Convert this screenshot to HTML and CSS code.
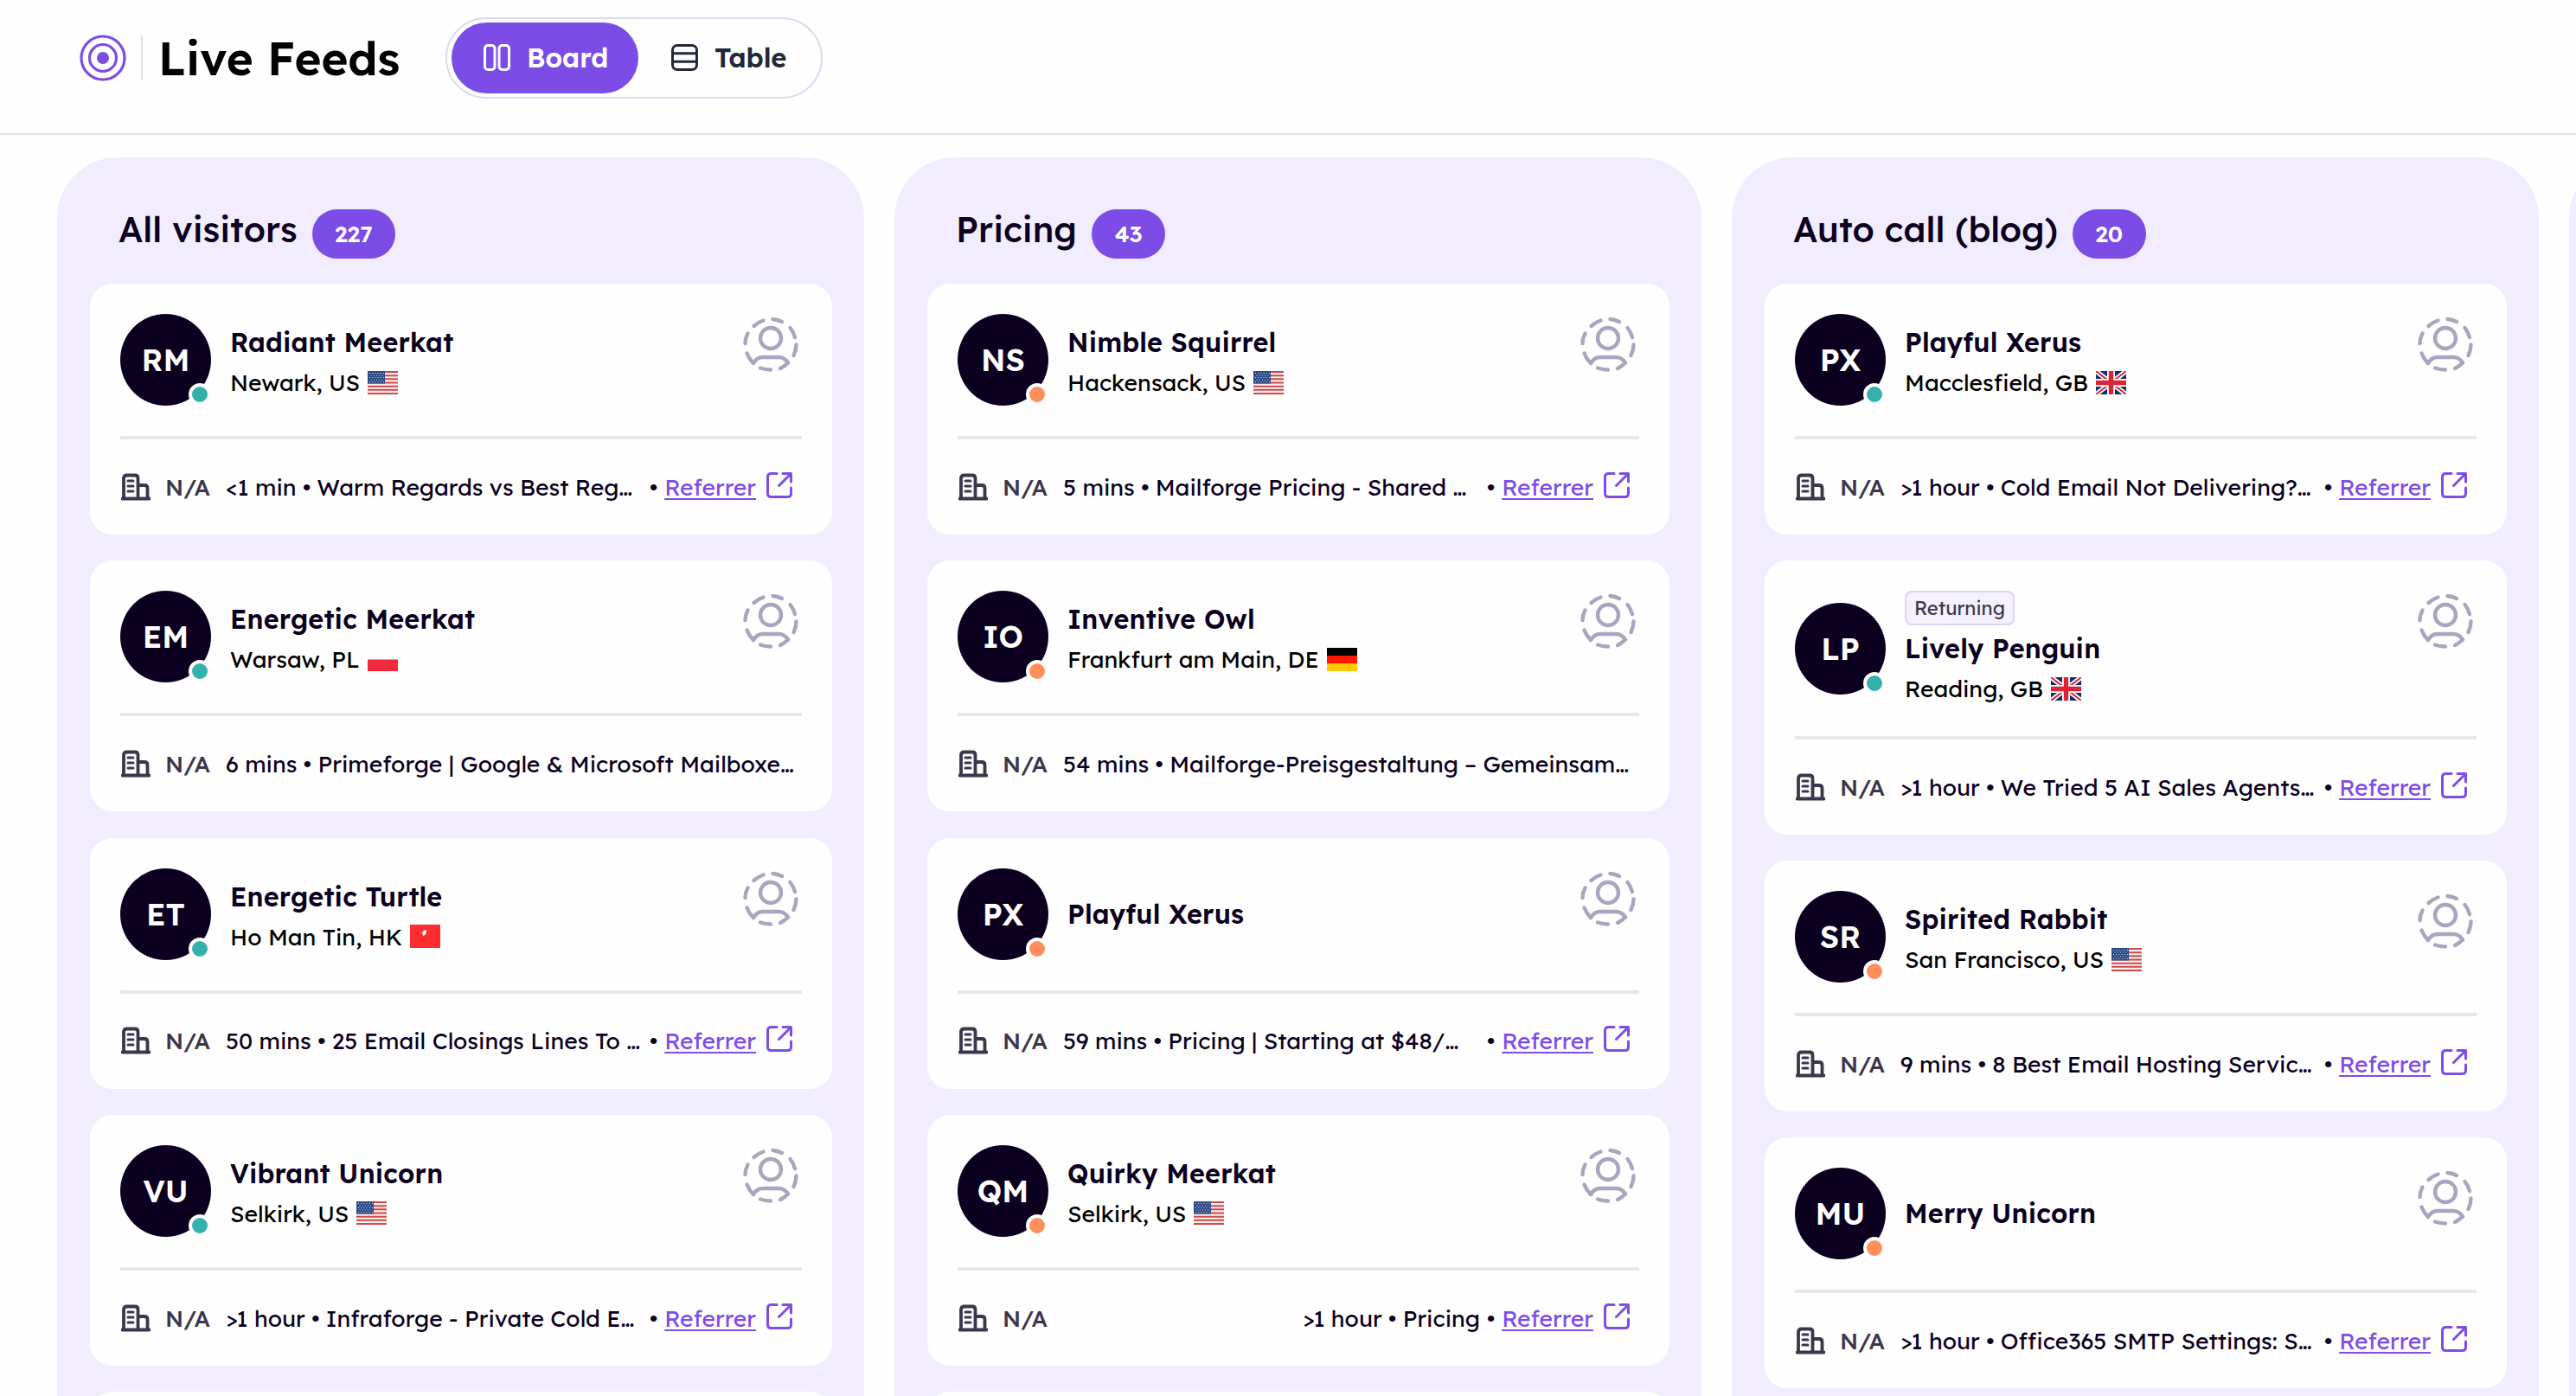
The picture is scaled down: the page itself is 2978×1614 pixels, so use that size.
FILE: index.html
```
<!DOCTYPE html>
<html lang="en">
<head>
    <meta charset="UTF-8">
    <meta name="viewport" content="width=device-width, initial-scale=1.0">
    <title>Live Feeds</title>
    <link rel="stylesheet" href="styles.css">
</head>
<body>
    <!-- Shared icons -->
    <svg class="sprite" aria-hidden="true">
        <symbol id="icon-building" viewBox="0 0 34 32">
            <path d="M3 29V6q0-3.500 3.500-3.500H16q3.500 0 3.500 3.500V29M19.500 14H27q3.500 0 3.500 3.500V29M1.500 29.500H32.500" fill="none" stroke="currentColor" stroke-width="3.800" stroke-linecap="round"/>
            <path d="M8 9h6M8 15h6M8 21h6" fill="none" stroke="currentColor" stroke-width="3" stroke-linecap="round"/>
        </symbol>
        <symbol id="icon-link" viewBox="0 0 30 30">
            <path d="M12 1.500H5.500Q1.500 1.500 1.500 5.500V24.500Q1.500 28.500 5.500 28.500H24.500Q28.500 28.500 28.500 24.500V18M19 1.500H28.500V11M28 2L14.500 15.500" fill="none" stroke="currentColor" stroke-width="3" stroke-linecap="round" stroke-linejoin="round"/>
        </symbol>
        <symbol id="icon-user" viewBox="0 0 64 64">
            <g fill="none" stroke="currentColor" stroke-width="4.400" stroke-linecap="round" stroke-linejoin="round">
                <circle cx="32" cy="25" r="12"/>
                <path d="M12 54Q16 47 23 47H41Q48 47 52 53.500"/>
                <path d="M34.500 3Q40 3.500 45 6M54.500 13Q58.500 18 60 24M61.500 32.500Q61.500 39 58.500 45M52 53.500Q48 57.500 43 60M32 61.500Q26 61.500 20 59.500M12 54Q7 49 4.500 42.500M2.500 31Q2.500 25 5.500 19.500M12.500 11Q17.500 6.500 23.500 4.500"/>
            </g>
        </symbol>
        <symbol id="flag-US" viewBox="0 0 35 27">
            <path fill="#f4f0f0" d="M0 0h35v27H0z"/>
            <path d="M0 1h35M0 5.200h35M0 9.300h35M0 13.500h35M0 17.700h35M0 21.800h35M0 26h35" stroke="#d0494a" stroke-width="2.100"/>
            <path fill="#2c4a85" d="M0 0h20v14.500H0z"/>
            <path d="M2 2.500h17M3.500 5h15M2 7.500h17M3.500 10h15M2 12.500h17" stroke="#dfe4ef" stroke-width="1" stroke-dasharray="1 2.200"/>
        </symbol>
        <symbol id="flag-GB" viewBox="0 0 35 27">
            <path fill="#0c2b70" d="M0 0h35v27H0z"/>
            <path d="M0 0l35 27M35 0L0 27" stroke="#fff" stroke-width="5.500"/>
            <path d="M0 0l35 27M35 0L0 27" stroke="#dc2436" stroke-width="2"/>
            <path d="M17.500 0v27M0 13.500h35" stroke="#fff" stroke-width="9"/>
            <path d="M17.500 0v27M0 13.500h35" stroke="#dc2436" stroke-width="5.400"/>
        </symbol>
        <symbol id="flag-DE" viewBox="0 0 35 27">
            <path d="M0 0h35v9H0z"/>
            <path fill="#ff1700" d="M0 9h35v9H0z"/>
            <path fill="#ffc800" d="M0 18h35v9H0z"/>
        </symbol>
        <symbol id="flag-PL" viewBox="0 0 35 27">
            <path fill="#fefefe" d="M0 0h35v13.500H0z"/>
            <path fill="#f02a3c" d="M0 13.500h35V27H0z"/>
        </symbol>
        <symbol id="flag-HK" viewBox="0 0 35 27">
            <path fill="#ff2d2f" d="M0 0h35v27H0z"/>
            <path fill="#fff" d="M15.500 13q-3-4 1-6.500q3-1 2.500 1.500q0 3-3.500 5z"/>
        </symbol>
    </svg>

    <header class="topbar">
        <svg class="logo" viewBox="0 0 54 54" fill="none" stroke="#7c4ce6" stroke-width="3.200">
            <circle cx="27" cy="27" r="25"/>
            <circle cx="27" cy="27" r="15.500"/>
            <circle cx="27" cy="27" r="7" fill="#7c4ce6" stroke="none"/>
        </svg>
        <span class="topbar-divider"></span>
        <h1 class="page-title">Live Feeds</h1>
        <div class="view-switch">
            <button class="view-button active">
                <svg class="view-icon" viewBox="0 0 31 31" fill="none" stroke="currentColor" stroke-width="3">
                    <rect x="1.500" y="1.500" width="11.500" height="28" rx="3.500"/>
                    <rect x="18" y="1.500" width="11.500" height="28" rx="3.500"/>
                </svg>
                <span>Board</span>
            </button>
            <button class="view-button">
                <svg class="view-icon" viewBox="0 0 31 31" fill="none" stroke="currentColor" stroke-width="3">
                    <rect x="1.500" y="1.500" width="28" height="28" rx="5.500"/>
                    <path d="M2 10.800h27M2 20.200h27"/>
                </svg>
                <span>Table</span>
            </button>
        </div>
    </header>

    <main class="board" id="board"></main>

    <script src="feeds.js"></script>
</body>
</html>
```
FILE: styles.css
```
body {
    margin: 0;
    height: 1614px;
    overflow: hidden;
    background-color: #fefefe;
    color: #0b0020;
    font-family: Lexend, Inter, "Open Sans", sans-serif;
}

.sprite {
    display: none;
}

/* Top bar */
.topbar {
    box-sizing: border-box;
    height: 156px;
    padding: 20px 0 0 92px;
    display: flex;
    align-items: flex-start;
    border-bottom: 2px solid #e9e2f2;
}

.logo {
    width: 54px;
    height: 54px;
    margin-top: 20px;
}

.topbar-divider {
    width: 2px;
    height: 52px;
    margin: 21px 18px 0 17px;
    background-color: #e0e3ee;
}

.page-title {
    width: 332px;
    margin: 16px 0 0;
    line-height: 62px;
    font-size: 52.800px;
    font-weight: 600;
    color: #000;
}

.view-switch {
    box-sizing: border-box;
    width: 436px;
    height: 94px;
    padding: 4px 5px;
    display: flex;
    border: 2px solid #dedaee;
    border-radius: 47px;
}

.view-button {
    box-sizing: border-box;
    flex: 0 0 216px;
    height: 82px;
    padding: 0 0 1px 37px;
    display: flex;
    align-items: center;
    gap: 19px;
    border: none;
    border-radius: 41px;
    background: none;
    color: #232838;
    font-family: inherit;
    font-size: 31px;
    font-weight: 600;
    cursor: pointer;
}

.view-button + .view-button {
    padding-left: 38px;
}

.view-button.active {
    background-color: #7c4ce6;
    color: #fff;
}

.view-icon {
    width: 31px;
    height: 31px;
}

/* Columns */
.board {
    display: flex;
    gap: 35px;
    padding: 26px 0 0 66px;
}

.column {
    box-sizing: border-box;
    flex: 0 0 933px;
    height: 1432px;
    overflow: hidden;
    padding: 0 37px 0 38px;
    border-radius: 70px 70px 0 0;
    background-color: #f1ecfe;
}

.column-header {
    height: 146px;
    padding-left: 33px;
    display: flex;
    align-items: flex-start;
}

.column-title {
    margin: 58px 17px 0 0;
    line-height: 50px;
    font-size: 40.500px;
    font-weight: 500;
}

.column-count {
    margin-top: 60px;
    padding: 0 26.500px;
    line-height: 57px;
    border-radius: 29px;
    background-color: #7c4ce6;
    color: #fff;
    font-size: 26.500px;
    font-weight: 600;
}

/* Cards */
.card {
    box-sizing: border-box;
    min-height: 290px;
    margin-bottom: 30.300px;
    padding: 0 35px;
    border-radius: 26px;
    background-color: #fefefe;
}

.card-top {
    padding: 35px 0;
    min-height: 106px;
    display: flex;
    align-items: center;
    border-bottom: 4px solid #e8e6ed;
}

.avatar {
    position: relative;
    width: 105px;
    height: 106px;
    border-radius: 50%;
    background-color: #0b0020;
    color: #fff;
    font-size: 35.500px;
    font-weight: 600;
    line-height: 106px;
    text-align: center;
}

.status {
    position: absolute;
    left: 79px;
    top: 80px;
    width: 18px;
    height: 18px;
    border: 4px solid #fefefe;
    border-radius: 50%;
    background-color: #ff8f5a;
}

.status.online {
    background-color: #35b1ad;
}

.info {
    flex: 1;
    margin-left: 22px;
}

.tag {
    width: max-content;
    padding: 1px 9px 0;
    margin: 0 0 4px;
    line-height: 35px;
    border: 2px solid #dcd6ec;
    border-radius: 8px;
    background-color: #f4f0fd;
    color: #3c364c;
    font-size: 22px;
}

.name {
    line-height: 46px;
    font-size: 30.500px;
    font-weight: 600;
    letter-spacing: 0.200px;
}

.location {
    display: flex;
    align-items: center;
    gap: 9px;
    line-height: 46px;
    font-size: 26.500px;
    color: #000;
}

.name + .location {
    margin-bottom: -3px;
}

.name:first-child:not(:last-child) {
    padding-top: 3px;
}

.flag {
    width: 35px;
    height: 27px;
}

.assignee {
    align-self: flex-start;
    width: 64px;
    height: 64px;
    margin: 3px 4px 0 0;
    color: #aaa5bf;
}

.card-bottom {
    height: 109.500px;
    display: flex;
    align-items: center;
    font-size: 26.500px;
    white-space: nowrap;
}

.building {
    width: 34px;
    height: 32px;
    margin: 0 17px 0 1px;
    color: #3c364c;
}

.company {
    width: 70px;
    color: #3c364c;
    font-weight: 500;
}

.message.right {
    margin-left: auto;
    margin-right: 8px;
}

.referrer {
    margin-left: auto;
    padding-right: 11px;
    display: flex;
    align-items: center;
}

.message.right + .referrer {
    margin-left: 0;
}

.referrer a {
    margin: 0 12px 0 8px;
    color: #7f4ce8;
    text-decoration: underline;
    text-decoration-thickness: 2px;
    text-underline-offset: 3px;
}

.referrer svg {
    width: 30px;
    height: 30px;
    margin-top: -4px;
    color: #7f4ce8;
}
```
FILE: feeds.js
```
// [name, city, country, online, message, referrer, returning]
const columns = [
    {
        title: 'All visitors', count: 227, more: true,
        visitors: [
            ['Radiant Meerkat', 'Newark, US', 'US', true, '<1 min • Warm Regards vs Best Reg…', true],
            ['Energetic Meerkat', 'Warsaw, PL', 'PL', true, '6 mins • Primeforge | Google & Microsoft Mailboxe…', false],
            ['Energetic Turtle', 'Ho Man Tin, HK', 'HK', true, '50 mins • 25 Email Closings Lines To …', true],
            ['Vibrant Unicorn', 'Selkirk, US', 'US', true, '>1 hour • Infraforge - Private Cold E…', true]
        ]
    },
    {
        title: 'Pricing', count: 43, more: true,
        visitors: [
            ['Nimble Squirrel', 'Hackensack, US', 'US', false, '5 mins • Mailforge Pricing - Shared …', true],
            ['Inventive Owl', 'Frankfurt am Main, DE', 'DE', false, '54 mins • Mailforge-Preisgestaltung – Gemeinsam…', false],
            ['Playful Xerus', '', '', false, '59 mins • Pricing | Starting at $48/…', true],
            ['Quirky Meerkat', 'Selkirk, US', 'US', false, '>1 hour • Pricing', true]
        ]
    },
    {
        title: 'Auto call (blog)', count: 20,
        visitors: [
            ['Playful Xerus', 'Macclesfield, GB', 'GB', true, '>1 hour • Cold Email Not Delivering?…', true],
            ['Lively Penguin', 'Reading, GB', 'GB', true, '>1 hour • We Tried 5 AI Sales Agents…', true, true],
            ['Spirited Rabbit', 'San Francisco, US', 'US', false, '9 mins • 8 Best Email Hosting Servic…', true],
            ['Merry Unicorn', '', '', false, '>1 hour • Office365 SMTP Settings: S…', true]
        ]
    },
    { title: '', count: 0, visitors: [] }
];

function escapeText(text) {
    return text.replace(/&/g, '&amp;').replace(/</g, '&lt;').replace(/>/g, '&gt;');
}

function renderCard([name, city, country, online, message, referrer, returning]) {
    const initials = name.split(' ').map(word => word[0]).join('');
    // short messages sit next to the referrer
    const right = message.length < 20 ? 'right' : '';
    return `
        <article class="card">
            <div class="card-top">
                <div class="avatar">${initials}<span class="status ${online ? 'online' : ''}"></span></div>
                <div class="info">
                    ${returning ? '<div class="tag">Returning</div>' : ''}
                    <div class="name">${name}</div>
                    ${city ? `<div class="location">${city}<svg class="flag"><use href="#flag-${country}"/></svg></div>` : ''}
                </div>
                <svg class="assignee"><use href="#icon-user"/></svg>
            </div>
            <div class="card-bottom">
                <svg class="building"><use href="#icon-building"/></svg>
                <span class="company">N/A</span>
                <span class="message ${right}">${escapeText(message)}</span>
                ${referrer ? '<span class="referrer">•<a href="#">Referrer</a><svg><use href="#icon-link"/></svg></span>' : ''}
            </div>
        </article>`;
}

document.getElementById('board').innerHTML = columns.map(column => `
    <section class="column">
        <div class="column-header">
            ${column.title ? `<h2 class="column-title">${column.title}</h2><span class="column-count">${column.count}</span>` : ''}
        </div>
        ${column.visitors.map(renderCard).join('')}
        ${column.more ? '<article class="card"></article>' : ''}
    </section>`).join('');
```
